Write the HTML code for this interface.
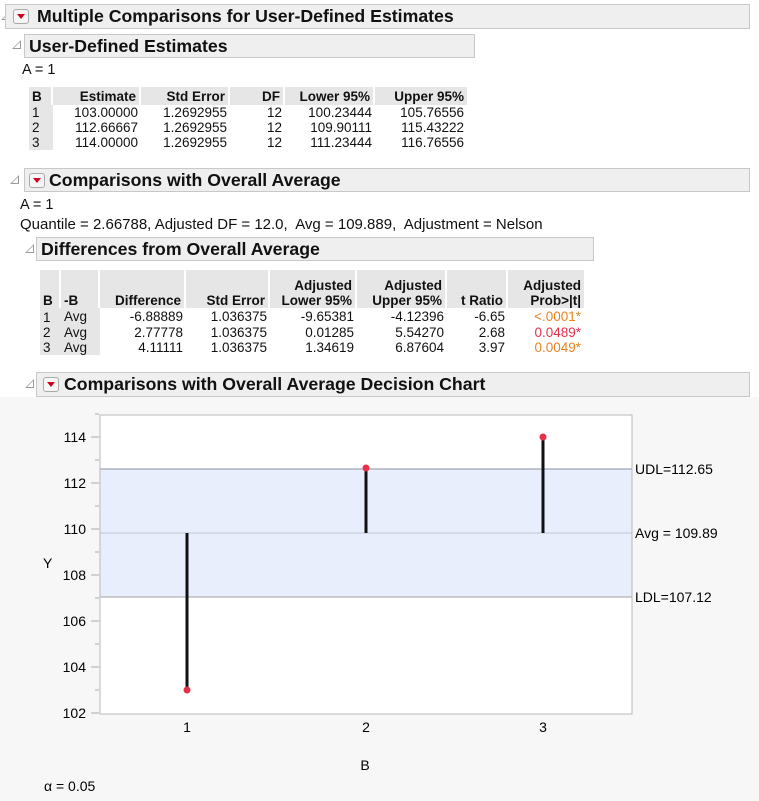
<!DOCTYPE html>
<html><head><meta charset="utf-8"><style>
body{margin:0;width:759px;height:801px;background:#fff;font-family:"Liberation Sans",sans-serif;font-size:13.5px;color:#111;position:relative;overflow:hidden}
.a{position:absolute;white-space:nowrap}
.hb{position:absolute;background:#efefef;border:1px solid #c8c8c8;font-weight:bold;font-size:17.7px;box-sizing:border-box;padding-left:4px;line-height:22px}
.tri{position:absolute;width:0;height:0;border-left:9px solid transparent;border-bottom:9px solid #999}
.tri:after{content:"";position:absolute;left:-7px;top:2px;border-left:6px solid transparent;border-bottom:6px solid #fff}
.btn{position:absolute;width:16px;height:15px;border:1px solid #aaa;border-radius:3px;background:#f6f6f6;box-sizing:border-box}
.btn:after{content:"";position:absolute;left:3px;top:4px;border-left:4px solid transparent;border-right:4px solid transparent;border-top:5px solid #d0021b}
table{position:absolute;border-collapse:separate;border-spacing:0;font-size:13.5px}
td,th{padding:0 3px;text-align:right;line-height:15px}
th{background:#e6e6e6;border-right:2px solid #fff;font-weight:bold}
td.f{background:#e6e6e6;text-align:left}
</style></head><body>
<div style="position:absolute;left:0;top:397px;width:759px;height:404px;background:#f7f7f7"></div>

<div class="tri" style="left:1px;top:11px"></div>
<div class="hb" style="left:5px;top:4px;width:745px;height:25px;padding-left:31px">Multiple Comparisons for User-Defined Estimates</div>
<div class="btn" style="left:13px;top:9px"></div>

<div class="tri" style="left:12px;top:40px"></div>
<div class="hb" style="left:24px;top:34px;width:451px;height:24px">User-Defined Estimates</div>
<div class="a" style="left:22px;top:62px;font-size:14.5px">A = 1</div>
<table style="left:29px;top:87px">
<tr><th style="text-align:left;width:16px;height:18px">B</th><th style="width:80px">Estimate</th><th style="width:81px">Std Error</th><th style="width:47px">DF</th><th style="width:82px">Lower 95%</th><th style="width:86px;border:0">Upper 95%</th></tr>
<tr><td class="f">1</td><td>103.00000</td><td>1.2692955</td><td>12</td><td>100.23444</td><td>105.76556</td></tr>
<tr><td class="f">2</td><td>112.66667</td><td>1.2692955</td><td>12</td><td>109.90111</td><td>115.43222</td></tr>
<tr><td class="f">3</td><td>114.00000</td><td>1.2692955</td><td>12</td><td>111.23444</td><td>116.76556</td></tr>
</table>

<div class="tri" style="left:10px;top:175px"></div>
<div class="hb" style="left:24px;top:168px;width:726px;height:24px;padding-left:24px">Comparisons with Overall Average</div>
<div class="btn" style="left:29px;top:173px"></div>
<div class="a" style="left:20px;top:197px;font-size:14.5px">A = 1</div>
<div class="a" style="left:20px;top:216px;font-size:15px">Quantile = 2.66788, Adjusted DF = 12.0,&nbsp; Avg = 109.889,&nbsp; Adjustment = Nelson</div>

<div class="tri" style="left:25px;top:244px"></div>
<div class="hb" style="left:36px;top:237px;width:558px;height:24px">Differences from Overall Average</div>
<table style="left:40px;top:270px">
<tr><th style="text-align:left;width:13px;height:38px;vertical-align:bottom">B</th><th style="text-align:left;width:31px;vertical-align:bottom">-B</th><th style="width:78px;vertical-align:bottom">Difference</th><th style="width:76px;vertical-align:bottom">Std Error</th><th style="width:79px;vertical-align:bottom">Adjusted<br>Lower 95%</th><th style="width:82px;vertical-align:bottom">Adjusted<br>Upper 95%</th><th style="width:53px;vertical-align:bottom">t Ratio</th><th style="width:70px;border:0;vertical-align:bottom">Adjusted<br>Prob&gt;|t|</th></tr>
<tr><td class="f" style="padding-top:2px">1</td><td class="f">Avg</td><td>-6.88889</td><td>1.036375</td><td>-9.65381</td><td>-4.12396</td><td>-6.65</td><td style="color:#e8821e">&lt;.0001*</td></tr>
<tr><td class="f">2</td><td class="f">Avg</td><td>2.77778</td><td>1.036375</td><td>0.01285</td><td>5.54270</td><td>2.68</td><td style="color:#e8304a">0.0489*</td></tr>
<tr><td class="f">3</td><td class="f">Avg</td><td>4.11111</td><td>1.036375</td><td>1.34619</td><td>6.87604</td><td>3.97</td><td style="color:#e8821e">0.0049*</td></tr>
</table>

<div class="tri" style="left:25px;top:379px"></div>
<div class="hb" style="left:36px;top:372px;width:714px;height:25px;padding-left:27px">Comparisons with Overall Average Decision Chart</div>
<div class="btn" style="left:43px;top:377px"></div>

<svg class="a" style="left:0;top:0" width="759" height="801" font-family="Liberation Sans" font-size="14">
<rect x="100" y="415" width="532" height="299" fill="#fff"/>
<rect x="100" y="469" width="532" height="128" fill="#e9eefc"/>
<line x1="100" y1="469" x2="632" y2="469" stroke="#8890a0"/>
<line x1="100" y1="533" x2="632" y2="533" stroke="#c0c6d4"/>
<line x1="100" y1="597" x2="632" y2="597" stroke="#a0a0a0"/>
<rect x="100" y="415" width="532" height="299" fill="none" stroke="#b8b8b8"/>
<g stroke="#aaa">
<line x1="91" y1="437" x2="99" y2="437"/><line x1="91" y1="483" x2="99" y2="483"/><line x1="91" y1="529" x2="99" y2="529"/><line x1="91" y1="575" x2="99" y2="575"/><line x1="91" y1="621" x2="99" y2="621"/><line x1="91" y1="667" x2="99" y2="667"/><line x1="91" y1="713" x2="99" y2="713"/>
<line x1="95" y1="414" x2="99" y2="414"/><line x1="95" y1="460" x2="99" y2="460"/><line x1="95" y1="506" x2="99" y2="506"/><line x1="95" y1="552" x2="99" y2="552"/><line x1="95" y1="598" x2="99" y2="598"/><line x1="95" y1="644" x2="99" y2="644"/><line x1="95" y1="690" x2="99" y2="690"/>
</g>
<g text-anchor="end"><text x="86" y="442">114</text><text x="86" y="488">112</text><text x="86" y="534">110</text><text x="86" y="580">108</text><text x="86" y="626">106</text><text x="86" y="672">104</text><text x="86" y="718">102</text></g>
<g stroke="#111" stroke-width="3"><line x1="187" y1="533" x2="187" y2="690"/><line x1="366" y1="533" x2="366" y2="468"/><line x1="543" y1="533" x2="543" y2="437"/></g>
<g fill="#e8304a"><circle cx="187" cy="690" r="3.5"/><circle cx="366" cy="468" r="3.5"/><circle cx="543" cy="437" r="3.5"/></g>
<text x="635" y="474">UDL=112.65</text><text x="635" y="538">Avg = 109.89</text><text x="635" y="602">LDL=107.12</text>
<g text-anchor="middle"><text x="187" y="732">1</text><text x="366" y="732">2</text><text x="543" y="732">3</text><text x="365" y="770">B</text></g>
<text x="43" y="568">Y</text>
<text x="44" y="791">α = 0.05</text>
</svg>
</body></html>
